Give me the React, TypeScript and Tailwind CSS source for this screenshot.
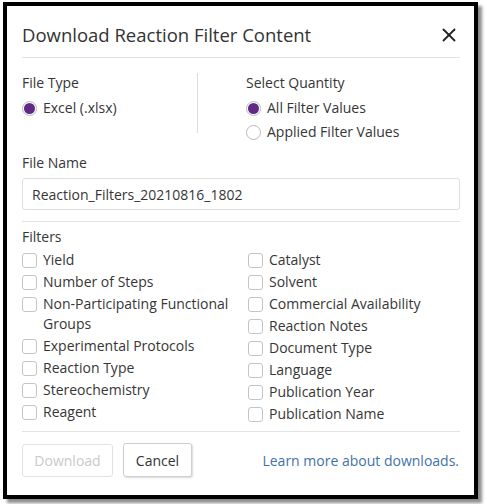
import { X } from "lucide-react";

const leftFilters = [
  "Yield",
  "Number of Steps",
  "Non-Participating Functional Groups",
  "Experimental Protocols",
  "Reaction Type",
  "Stereochemistry",
  "Reagent",
];

const rightFilters = [
  "Catalyst",
  "Solvent",
  "Commercial Availability",
  "Reaction Notes",
  "Document Type",
  "Language",
  "Publication Year",
  "Publication Name",
];

const Radio = ({ label, checked }: { label: string; checked?: boolean }) => (
  <label className="flex h-6 items-center gap-[6px]">
    <span className="flex h-[15px] w-[15px] shrink-0 items-center justify-center rounded-full border border-[#b9b9b9] bg-white">
      {checked && <span className="h-[11px] w-[11px] rounded-full bg-[#5e2a84]" />}
    </span>
    <span>{label}</span>
  </label>
);

const Check = ({ label }: { label: string }) => (
  <label className="mb-[2px] flex items-start gap-[6px] leading-5">
    <span className="mt-[3px] h-[15px] w-[15px] shrink-0 rounded-[3px] border border-[#c4c4c4] bg-white" />
    <span>{label}</span>
  </label>
);

export default function App() {
  return (
    <div className="h-[504px] w-[487px] bg-white pl-[3px] pt-[2px] font-['Open_Sans',sans-serif] text-[14px] text-[#363636]">
      <div className="h-[497px] w-[475px] border-4 border-black bg-white shadow-[4px_4px_3px_rgba(0,0,0,0.45)]">
        <div className="ml-[15px] mr-[14px] flex h-[52px] items-center justify-between border-b border-[#e3e3e3] pt-[7px]">
          <h1 className="text-[18.5px] leading-6 text-[#333]">Download Reaction Filter Content</h1>
          <X className="h-[22px] w-[22px] text-[#222]" strokeWidth={2} />
        </div>

        <div className="ml-[15px] mr-[14px]">
          <div className="mt-[15px] flex leading-5">
            <div className="w-[175px]">
              <div className="mb-[3px]">File Type</div>
              <Radio label="Excel (.xlsx)" checked />
            </div>
            <div className="h-[60px] border-l border-[#dcdcdc]" />
            <div className="pl-[48px]">
              <div className="mb-[3px]">Select Quantity</div>
              <Radio label="All Filter Values" checked />
              <Radio label="Applied Filter Values" />
            </div>
          </div>

          <div className="mt-[9px] leading-5">File Name</div>
          <div className="mt-[5px] flex h-[32px] items-center rounded-[3px] border border-[#dedede] px-[9px]">
            Reaction_Filters_20210816_1802
          </div>

          <div className="mt-[11px] border-t border-[#e3e3e3]" />

          <div className="mt-[5px] leading-5">Filters</div>
          <div className="mt-[3px] grid grid-cols-[226px_1fr]">
            <div>
              {leftFilters.map((f) => (
                <Check key={f} label={f} />
              ))}
            </div>
            <div>
              {rightFilters.map((f) => (
                <Check key={f} label={f} />
              ))}
            </div>
          </div>

          <div className="mt-[5px] border-t border-[#e3e3e3]" />

          <div className="mt-[11px] flex items-center">
            <button className="h-[33px] w-[91px] rounded-[3px] border border-[#e2e2e2] bg-white text-[#c9c9c9]">
              Download
            </button>
            <button className="ml-[10px] h-[34px] w-[69px] rounded-[3px] border border-[#cfcfcf] bg-white text-[#333] shadow-[1px_1px_2px_rgba(0,0,0,0.15)]">
              Cancel
            </button>
            <a className="ml-auto mr-[1px] text-[#3f72a8]">Learn more about downloads.</a>
          </div>
        </div>
      </div>
    </div>
  );
}
